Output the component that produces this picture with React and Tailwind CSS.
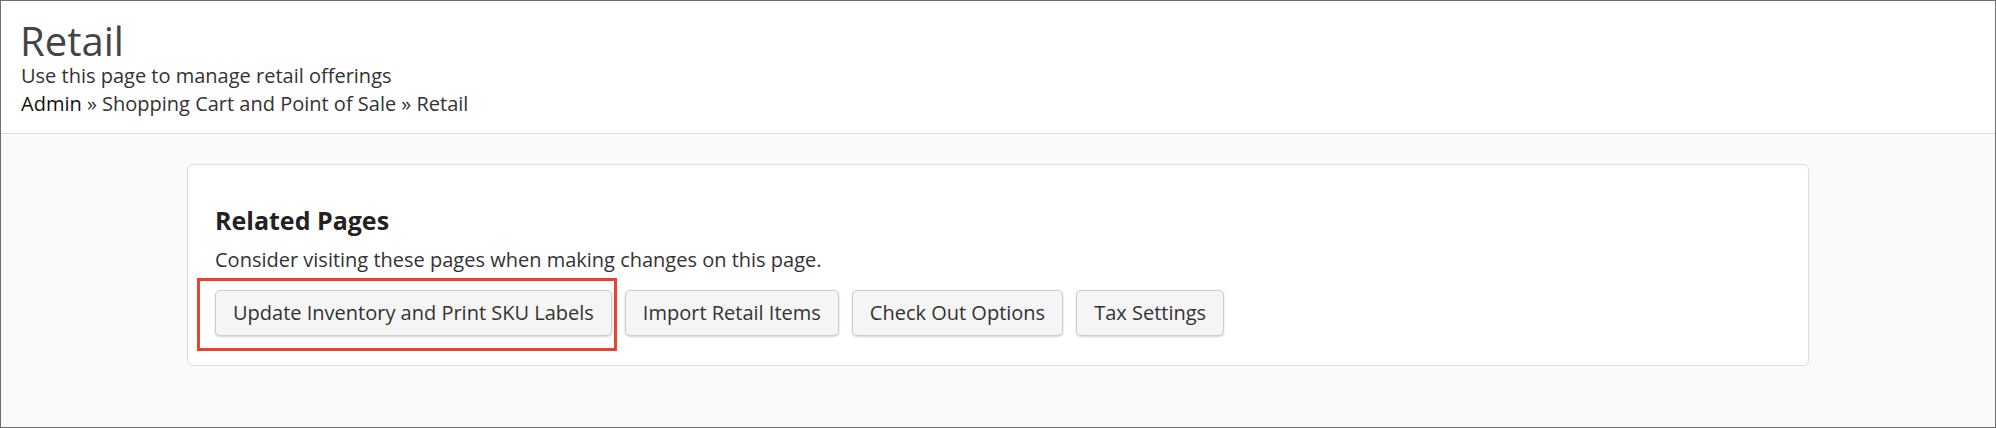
import React from 'react';

const relatedPages = [
  'Update Inventory and Print SKU Labels',
  'Import Retail Items',
  'Check Out Options',
  'Tax Settings',
];

export default function App() {
  return (
    <div
      className="w-[1996px] h-[428px] border border-[#6e6e6e] bg-[#fafafa] overflow-hidden flex flex-col"
      style={{ fontFamily: '"Open Sans", "Noto Sans", sans-serif' }}
    >
      {/* PAGE HEADER */}
      <div className="bg-white border-b border-[#dcdcdc] pl-[20px] pt-[18px] pb-[15px]">
        <h1 className="text-[40px] leading-[43px] text-[#444444] font-normal -ml-[1px]">Retail</h1>
        <p className="text-[20px] leading-[28px] text-[#333333]">Use this page to manage retail offerings</p>
        <div className="text-[20px] leading-[28px] text-[#333333]">
          <span className="text-[#111111]">Admin</span> » Shopping Cart and Point of Sale » Retail
        </div>
      </div>

      {/* RELATED PAGES CARD */}
      <div className="pt-[30px]">
        <div className="w-[1622px] h-[202px] mx-auto bg-white border border-[#dddddd] rounded-[6px] pl-[27px] pt-[42px]">
          <h3 className="text-[25px] leading-[26px] font-bold text-[#222222]">Related Pages</h3>
          <p className="text-[20px] leading-[28px] text-[#333333] mt-[13px]">
            Consider visiting these pages when making changes on this page.
          </p>

          <div className="relative flex items-center gap-[13px] mt-[16px]">
            {relatedPages.map((label) => (
              <button
                key={label}
                type="button"
                className="h-[46px] px-[17px] text-[20px] leading-[28px] text-[#333333] bg-[#f5f5f5] border border-[#cccccc] rounded-[5px] shadow-[0_1px_2px_rgba(0,0,0,0.18)] whitespace-nowrap"
              >
                {label}
              </button>
            ))}
            {/* annotation highlight */}
            <div className="absolute left-[-18px] top-[-12px] w-[420px] h-[73px] border-[3px] border-[#e8432e] pointer-events-none" />
          </div>
        </div>
      </div>
    </div>
  );
}
